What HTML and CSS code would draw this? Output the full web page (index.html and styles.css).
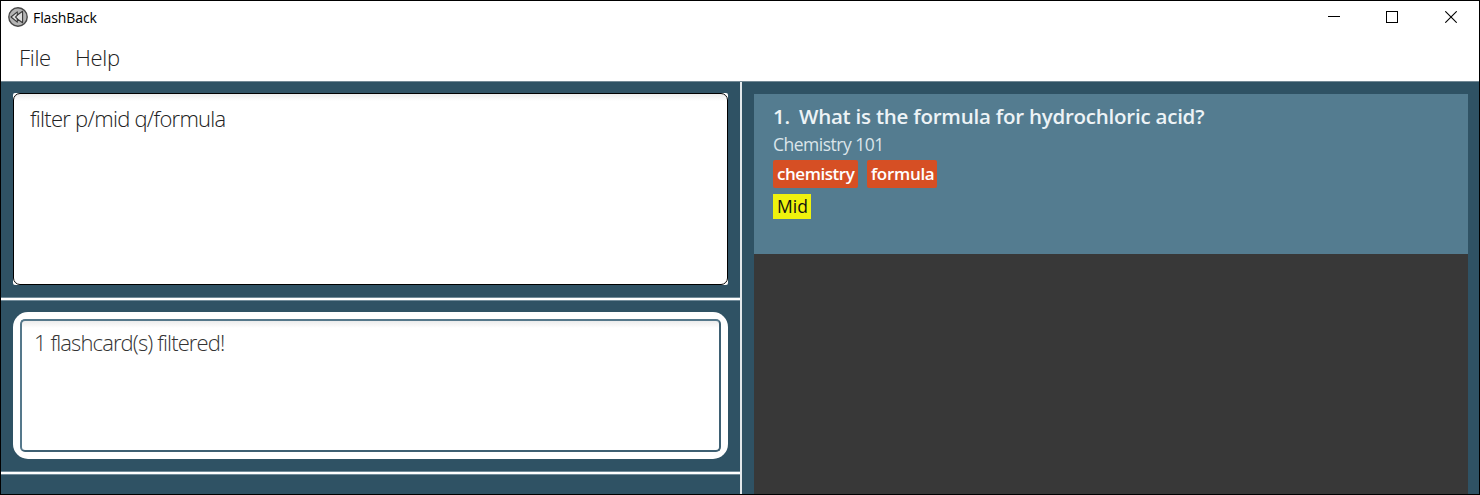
FILE: index.html
```
<!DOCTYPE html>
<html lang="en">
<head>
<meta charset="utf-8">
<title>FlashBack</title>
<link rel="stylesheet" href="styles.css">
</head>
<body>
<div class="window">
  <header class="titlebar">
    <svg class="logo" width="20" height="20" viewBox="0 0 20 20">
      <circle cx="10" cy="10" r="9.2" fill="#b4b4b4" stroke="#484848" stroke-width="1.4"/>
      <path d="M9.3 4.8L3 10L9.3 15.2V12L14.6 15.8V4.2L9.3 8Z" fill="#ddd" stroke="#383838" stroke-width="1.1" stroke-linejoin="round"/>
      <path d="M9.6 7.8L7.5 10L9.6 12.2" fill="none" stroke="#383838" stroke-width="1.1"/>
    </svg>
    <span class="title">FlashBack</span>
    <div class="controls">
      <svg class="minimize" width="12" height="12" viewBox="0 0 12 12"><path d="M0 5.5H12" stroke="#000"/></svg>
      <svg class="maximize" width="12" height="12" viewBox="0 0 12 12" shape-rendering="crispEdges"><path d="M.5 .5H11.5V11.5H.5Z" fill="none" stroke="#000"/></svg>
      <svg width="12" height="12" viewBox="0 0 12 12"><path d="M.3 .3L11.7 11.7M11.7 .3L.3 11.7" stroke="#000" stroke-width="1.1"/></svg>
    </div>
  </header>
  <nav class="menubar"><span class="menu-file">File</span><span class="menu-help">Help</span></nav>
  <main class="content">
    <section class="left">
      <div class="pane command-pane"><div class="command"><div class="command-field"><span class="command-text">filter p/mid q/formula</span></div></div></div>
      <div class="divider"></div>
      <div class="pane result-pane"><div class="result"><div class="result-field"><span class="result-text">1 flashcard(s) filtered!</span></div></div></div>
      <div class="divider"></div>
    </section>
    <section class="right">
      <div class="list">
        <article class="card">
          <h1 class="question"><span class="number">1.</span><span class="question-text">What is the formula for hydrochloric acid?</span></h1>
          <p class="module">Chemistry 101</p>
          <div class="tags"><span class="tag tag-chemistry">chemistry</span><span class="tag tag-formula">formula</span></div>
          <span class="priority">Mid</span>
        </article>
      </div>
    </section>
  </main>
</div>
</body>
</html>
```
FILE: styles.css
```
* { box-sizing: border-box; }
body { margin: 0; font-family: "Open Sans", "Noto Sans", sans-serif; }
.window { width: 1480px; height: 495px; border: 1px solid #000; background: #fff; display: flex; flex-direction: column; overflow: hidden; white-space: nowrap; }
.titlebar { height: 32px; flex: none; display: flex; align-items: center; padding: 0 22px 0 7px; }
.logo { margin-right: 5px; }
.title { font-size: 14px; letter-spacing: -.1px; color: #000; }
.controls { margin-left: auto; display: flex; }
.minimize { margin-right: 46px; }
.maximize { margin-right: 47px; }
.menubar { height: 49px; flex: none; display: flex; padding-left: 18px; line-height: 49px; font-size: 22px; font-weight: 300; color: #222; border-bottom: 1px solid #728894; letter-spacing: -.3px; }
.menu-file { width: 56px; }
.content { flex: 1; min-height: 0; display: flex; background: #2f5264; }
.left { width: 741px; flex: none; border-right: 2px solid #e3e9ec; }
.pane { padding: 11px 12px 12px; }
.divider { height: 4px; background: linear-gradient(#728c9a 1px, #fff 1px 3px, #728c9a 3px); }
.command { height: 192px; width: 715px; background: #fff; border-radius: 2px; }
.command-field { height: 100%; border: 1px solid #000; border-radius: 7px; padding: 7px 16px; background: linear-gradient(#ececec, #fff 7px); }
.command-text { display: block; font-size: 22px; font-weight: 300; line-height: 34px; letter-spacing: -.74px; color: #222; }
.result { height: 147px; width: 715px; border-radius: 15px; background: #fff; padding: 7px; }
.result-field { height: 133px; border: 2px solid; border-color: #55788b #3e6073 #3e6073 #55788b; border-radius: 5px; padding: 4px 12px; background: linear-gradient(#ececec, #fff 7px); }
.result-text { display: block; font-size: 22px; font-weight: 300; line-height: 34px; letter-spacing: -.88px; color: #333; font-variant-ligatures: none; }
.right { flex: 1; padding: 12px 11px 0 12px; display: flex; }
.list { flex: 1; background: #383838; }
.card { height: 160px; background: #547c90; padding: 8px 19px; display: flex; flex-direction: column; align-items: flex-start; }
.question { margin: 0; font-size: 20.5px; font-weight: 600; line-height: 28px; color: #edf3f6; display: flex; letter-spacing: -.23px; }
.number { width: 26px; }
.module { margin: 0 0 1px; font-size: 17.5px; line-height: 28px; color: #dbe5ea; font-weight: 400; letter-spacing: -.5px; }
.tags { display: flex; gap: 9px; margin-top: 1px; }
.tag { height: 28px; line-height: 27px; padding: 0 4px; border-radius: 2px; background: #d64f24; color: #fff; font-size: 17px; font-weight: 600; letter-spacing: -.45px; }
.tag-chemistry { width: 85px; }
.tag-formula { width: 70px; letter-spacing: -.3px; }
.priority { width: 38px; height: 25px; margin-top: 6px; padding-left: 4px; line-height: 25px; background: #eff20d; color: #111; font-size: 17.5px; }
```
